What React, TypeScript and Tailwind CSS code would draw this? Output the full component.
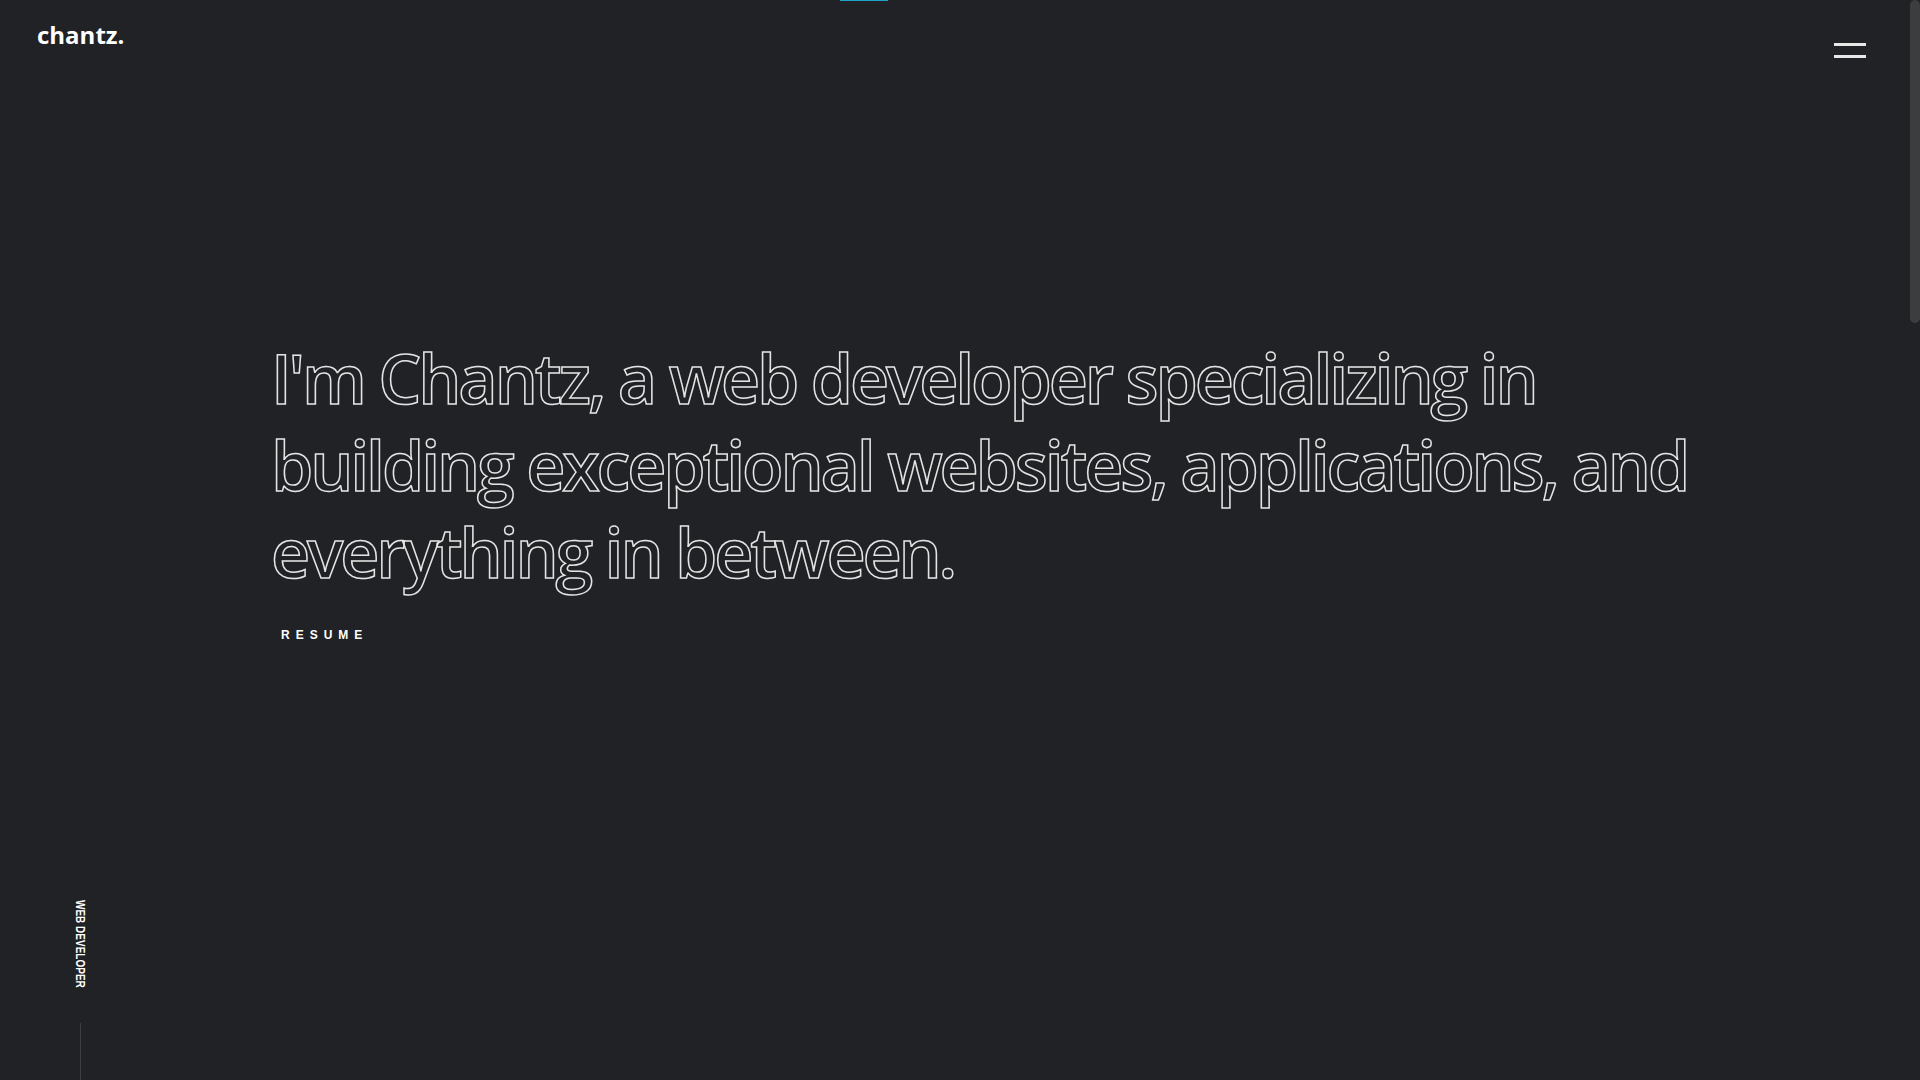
import React from "react";

const SANS = "font-['Open_Sans','Liberation_Sans',sans-serif]";

function Header() {
  return (
    <header className="flex items-start justify-between pl-[37px] pr-[44px]">
      <a href="#" className={`${SANS} mt-[19px] text-[24px] font-bold leading-[32px] text-white`}>
        chantz.
      </a>
      <button aria-label="Open menu" className="mt-[43px] flex w-[32px] flex-col gap-[9px]">
        <span className="block h-[3px] w-full bg-[#e8e8e8]" />
        <span className="block h-[3px] w-full bg-[#e8e8e8]" />
      </button>
    </header>
  );
}

function Hero() {
  return (
    <section className="pl-[271px] pt-[276px]">
      <h1
        className={`${SANS} text-[68px] font-semibold leading-[87px] tracking-[-0.046em] text-transparent [-webkit-text-stroke:1.5px_#e4e4e4]`}
      >
        I'm Chantz, a web developer specializing in
        <br />
        building exceptional websites, applications, and
        <br />
        everything in between.
      </h1>
      <a
        href="#"
        className="mt-[32px] inline-block px-[10px] font-['Liberation_Sans',sans-serif] text-[12px] font-bold uppercase leading-[16px] tracking-[0.5em] text-white"
      >
        Resume
      </a>
    </section>
  );
}

export default function App() {
  return (
    <div className="flex h-screen overflow-hidden bg-[#212226]">
      <main className="relative flex-1">
        {/* active nav indicator */}
        <span className="absolute left-[840px] top-0 h-px w-[48px] bg-[#1ca3c9]" />

        <Header />
        <Hero />

        {/* side label */}
        <div className="absolute bottom-0 left-[70px] flex w-[20px] flex-col items-center">
          <div className="h-[87px]">
            <span className="block origin-top scale-y-[0.8] whitespace-nowrap font-['Liberation_Sans',sans-serif] text-[12.5px] font-bold uppercase leading-[12px] text-white [writing-mode:vertical-rl]">
              Web Developer
            </span>
          </div>
          <span className="mt-[36px] block h-[57px] w-px bg-[#3d3e40]" />
        </div>
      </main>

      {/* scroll rail */}
      <aside className="w-[10px] shrink-0">
        <div className="h-[323px] rounded-full bg-[#3c3d3f]" />
      </aside>
    </div>
  );
}
